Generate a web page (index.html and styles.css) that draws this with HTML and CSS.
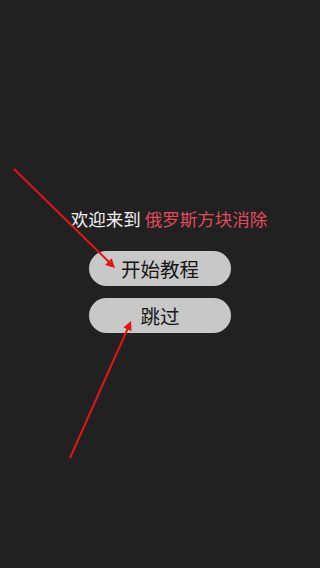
FILE: index.html
```html
<!DOCTYPE html>
<html lang="zh">
<head>
<meta charset="utf-8">
<meta name="viewport" content="width=device-width, initial-scale=1">
<link rel="stylesheet" href="styles.css">
</head>
<body>
<main class="screen">
  <p class="title">欢迎来到 <span class="game">俄罗斯方块消除</span></p>
  <button class="btn btn-start">开始教程</button>
  <button class="btn btn-skip">跳过</button>
</main>
<svg class="arrows" width="320" height="568" viewBox="0 0 320 568" xmlns="http://www.w3.org/2000/svg">
  <line x1="14" y1="169" x2="109" y2="262" stroke="#e31414" stroke-width="2"/>
  <polygon points="115,268 105.2,265 111.7,258.3" fill="#e31414"/>
  <line x1="70" y1="458" x2="127.5" y2="329" stroke="#e31414" stroke-width="2"/>
  <polygon points="131,321 131.6,331.3 123.4,327.6" fill="#e31414"/>
</svg>
</body>
</html>
```

FILE: styles.css
```css
html, body {
  margin: 0;
  padding: 0;
  background: #212121;
  width: 320px;
  height: 568px;
  overflow: hidden;
  font-family: "Noto Sans CJK SC", "Noto Sans", sans-serif;
}

.screen {
  display: flex;
  flex-direction: column;
  align-items: center;
  padding-top: 207px;
}

.title {
  margin: 0 0 0 18px;
  font-size: 17.5px;
  line-height: 24px;
  color: #f2f2f2;
  white-space: nowrap;
}

.game {
  color: #e04a5e;
}

.btn {
  width: 142px;
  height: 35px;
  border: none;
  border-radius: 18px;
  background: #c8c8c8;
  color: #141414;
  font-family: "Noto Sans CJK SC", "Noto Sans", sans-serif;
  font-size: 19.5px;
  line-height: 35px;
  padding: 0;
}

.btn-start {
  margin-top: 20px;
}

.btn-skip {
  margin-top: 12px;
}

.arrows {
  position: absolute;
  left: 0;
  top: 0;
  pointer-events: none;
}
```
